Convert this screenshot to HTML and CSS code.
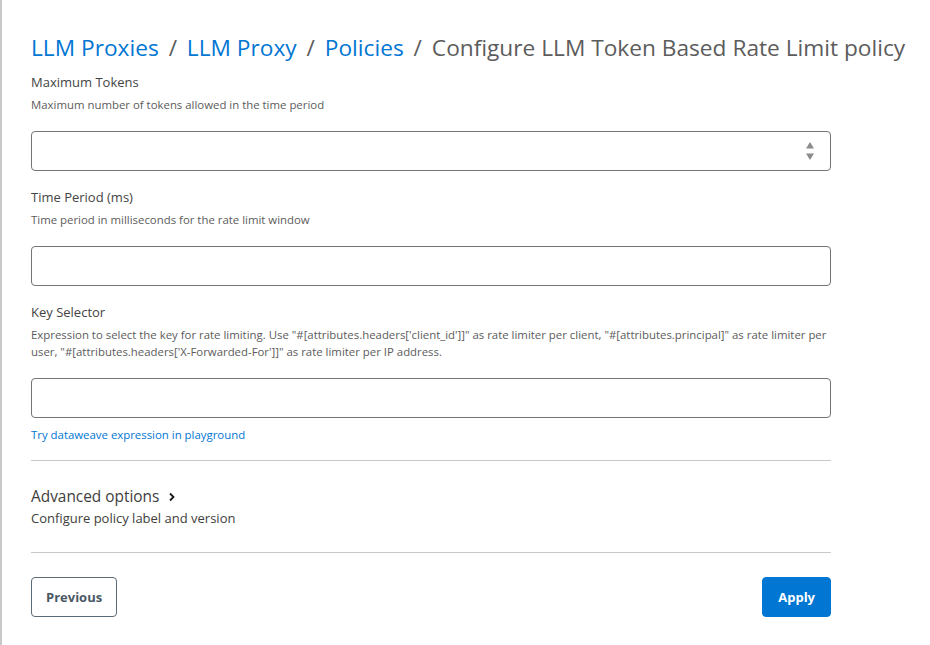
FILE: index.html
```html
<!DOCTYPE html>
<html lang="en">
<head>
  <meta charset="UTF-8">
  <meta name="viewport" content="width=device-width, initial-scale=1.0">
  <title>Configure LLM Token Based Rate Limit policy</title>
  <link rel="stylesheet" href="styles.css">
</head>
<body>
  <main class="page">
    <h1 class="crumbs">
      <a href="#">LLM Proxies</a>
      <span class="sep">/</span>
      <a href="#">LLM Proxy</a>
      <span class="sep">/</span>
      <a href="#">Policies</a>
      <span class="sep">/</span>
      <span class="current">Configure LLM Token Based Rate Limit policy</span>
    </h1>

    <form class="policy-form" onsubmit="return false;">
      <div class="field">
        <label for="maxTokens">Maximum Tokens</label>
        <p class="help">Maximum number of tokens allowed in the time period</p>
        <div class="number-box">
          <input type="text" id="maxTokens">
          <span class="spinner">
            <svg width="10" height="22" viewBox="0 0 10 22"><path d="M5 2 L9 8.5 H1 Z" fill="#8c8c8c"/><path d="M1 13.5 H9 L5 20 Z" fill="#8c8c8c"/></svg>
          </span>
        </div>
      </div>

      <div class="field">
        <label for="timePeriod">Time Period (ms)</label>
        <p class="help">Time period in milliseconds for the rate limit window</p>
        <input type="text" id="timePeriod">
      </div>

      <div class="field">
        <label for="keySelector">Key Selector</label>
        <p class="help">Expression to select the key for rate limiting. Use "#[attributes.headers['client_id']]" as rate limiter per client, "#[attributes.principal]" as rate limiter per user, "#[attributes.headers['X-Forwarded-For']]" as rate limiter per IP address.</p>
        <input type="text" id="keySelector">
        <a class="playground" href="#">Try dataweave expression in playground</a>
      </div>

      <div class="advanced">
        <div class="advanced-title">Advanced options
          <svg width="10" height="10" viewBox="0 0 10 10"><path d="M3 1.5 L6.5 5 L3 8.5" fill="none" stroke="#181818" stroke-width="1.8"/></svg>
        </div>
        <div class="advanced-sub">Configure policy label and version</div>
      </div>

      <div class="actions">
        <button type="button" class="btn">Previous</button>
        <button type="submit" class="btn btn-brand">Apply</button>
      </div>
    </form>
  </main>
</body>
</html>
```

FILE: styles.css
```css
html, body {
  margin: 0;
  height: 100%;
}
body {
  font-family: "Open Sans", "Noto Sans", sans-serif;
  color: #3e3e3c;
  background: #fff;
  border-left: 2px solid #c9c9c9;
  box-sizing: border-box;
}
.page {
  padding: 33px 0 0 29px;
  width: 800px;
}
.crumbs {
  margin: 0;
  font-size: 22.7px;
  font-weight: 400;
  line-height: 30px;
  white-space: nowrap;
  color: #5c5c5c;
}
.crumbs a {
  color: #0176d3;
  text-decoration: none;
}
.crumbs .sep {
  margin: 0 4px;
  color: #5c5c5c;
}
.field {
  margin-top: 9px;
}
.field + .field {
  margin-top: 16px;
}
.field label {
  display: block;
  font-size: 13px;
  line-height: 20px;
  color: #444;
}
.help {
  margin: 4px 0 0;
  font-size: 11.4px;
  line-height: 17px;
  color: #5c5c5c;
}
.field input {
  display: block;
  box-sizing: border-box;
  width: 100%;
  height: 40px;
  margin-top: 18px;
  border: 1px solid #747474;
  border-radius: 4px;
  padding: 0 12px;
  font: inherit;
}
.number-box {
  position: relative;
}
.spinner {
  position: absolute;
  right: 16px;
  top: 9px;
}
.playground {
  display: block;
  margin-top: 8px;
  font-size: 11.4px;
  line-height: 18px;
  color: #0176d3;
  text-decoration: none;
}
.advanced {
  margin-top: 16px;
  border-top: 1px solid #c9c9c9;
  border-bottom: 1px solid #c9c9c9;
  padding: 25px 0 24px;
}
.advanced-title {
  font-size: 15.4px;
  line-height: 22px;
  color: #3e3e3c;
}
.advanced-title svg {
  margin-left: 4px;
}
.advanced-sub {
  font-size: 13px;
  line-height: 20px;
  color: #3e3e3c;
}
.actions {
  display: flex;
  justify-content: space-between;
  margin-top: 24px;
}
.btn {
  height: 40px;
  padding: 0 14px;
  border: 1px solid #5c6b78;
  border-radius: 4px;
  background: #fff;
  font: inherit;
  font-size: 13px;
  font-weight: 700;
  color: #4a5864;
}
.btn-brand {
  padding: 0 15px;
  background: #0176d3;
  border-color: #0176d3;
  color: #fff;
}
```
